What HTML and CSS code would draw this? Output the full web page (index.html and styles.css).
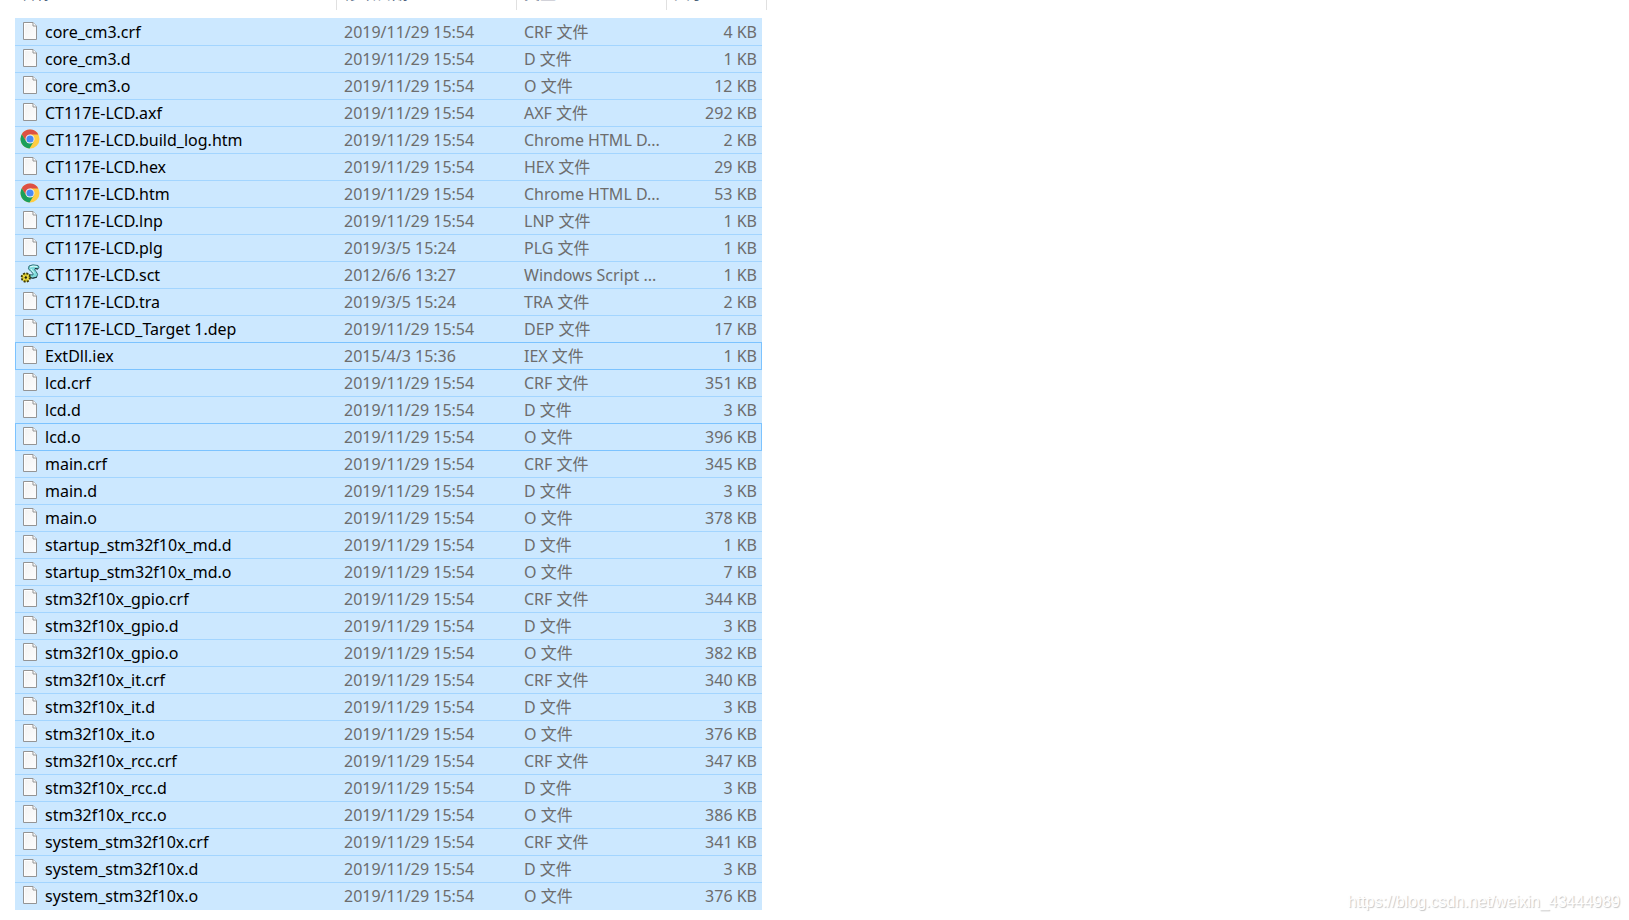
FILE: index.html
```html
<!DOCTYPE html>
<html lang="zh-CN">
<head>
<meta charset="utf-8">
<title>文件列表</title>
<link rel="stylesheet" href="styles.css">
</head>
<body>
<svg class="sprite" aria-hidden="true">
  <defs>
    <linearGradient id="paper" x1="0" y1="0" x2="1" y2="1"><stop offset="0" stop-color="#f2f2f2"/><stop offset="1" stop-color="#fdfdfd"/></linearGradient>
  </defs>
  <symbol id="file" viewBox="0 0 20 20">
    <path d="M3.5 1.5H13L16.500 5V18.500H3.500Z" fill="url(#paper)" stroke="#949494"/>
    <path d="M4.500 17.500V2.500H12" fill="none" stroke="#fff"/>
    <path d="M13 1.500V5H16.500" fill="#fff" stroke="#949494"/>
  </symbol>
  <symbol id="chrome" viewBox="0 0 20 20">
    <circle cx="10" cy="10" r="9.500" fill="#ffcd42"/>
    <path d="M1.800 5.200A9.500 9.500 0 0 1 18.300 5.500H10L6.100 12.200Z" fill="#dd5044"/>
    <path d="M1.800 5.200A9.500 9.500 0 0 0 9.500 19.500L13.900 12.300H6.100Z" fill="#1a9f5c"/>
    <circle cx="10" cy="10" r="4.500" fill="#f1f3f4"/>
    <circle cx="10" cy="10" r="3.600" fill="#4a8af4"/>
  </symbol>
  <symbol id="script" viewBox="0 0 20 20">
    <path d="M9 2Q12 0 18 1.500Q20 3 18 5L15 4.500Q14 6 16 7.500Q19 10 16.500 13.500Q13 15 8 13Q7 11 9 10.500L13 11Q14 9.500 11 7.500Q7 5 9 2Z" fill="#7fdcdc" stroke="#346f78"/>
    <path d="M10 3Q13 1.500 17 2.500M11 5Q11 6 14.500 9" fill="none" stroke="#e6ffff"/>
    <path d="M18 5L15 4.500M8 13Q13 15.500 17 13" fill="none" stroke="#1d2f35"/>
    <circle cx="5.800" cy="13.500" r="4.200" fill="#d8c72c" stroke="#3f3a08" stroke-width="1.800" stroke-dasharray="2 1.300"/>
    <path d="M3 11.500L8.500 15.500M8.500 11L3.500 16" stroke="#fff06a"/>
    <circle cx="5.800" cy="13.500" r="1.200" fill="#242208"/>
  </symbol>
</svg>
<main class="pane">
<table class="files">
<colgroup><col class="c-name"><col class="c-date"><col class="c-type"><col class="c-size"></colgroup>
<thead><tr>
<th><div class="head first"><span>名称</span></div></th>
<th><div class="head"><span>修改日期</span></div></th>
<th><div class="head"><span>类型</span></div></th>
<th><div class="head last"><span>大小</span></div></th>
</tr></thead>
<tbody>
<tr><td><div class="name"><svg><use href="#file"/></svg>core_cm3.crf</div></td><td>2019/11/29 15:54</td><td>CRF 文件</td><td>4 KB</td></tr>
<tr><td><div class="name"><svg><use href="#file"/></svg>core_cm3.d</div></td><td>2019/11/29 15:54</td><td>D 文件</td><td>1 KB</td></tr>
<tr><td><div class="name"><svg><use href="#file"/></svg>core_cm3.o</div></td><td>2019/11/29 15:54</td><td>O 文件</td><td>12 KB</td></tr>
<tr><td><div class="name"><svg><use href="#file"/></svg>CT117E-LCD.axf</div></td><td>2019/11/29 15:54</td><td>AXF 文件</td><td>292 KB</td></tr>
<tr><td><div class="name"><svg><use href="#chrome"/></svg>CT117E-LCD.build_log.htm</div></td><td>2019/11/29 15:54</td><td>Chrome HTML D...</td><td>2 KB</td></tr>
<tr><td><div class="name"><svg><use href="#file"/></svg>CT117E-LCD.hex</div></td><td>2019/11/29 15:54</td><td>HEX 文件</td><td>29 KB</td></tr>
<tr><td><div class="name"><svg><use href="#chrome"/></svg>CT117E-LCD.htm</div></td><td>2019/11/29 15:54</td><td>Chrome HTML D...</td><td>53 KB</td></tr>
<tr><td><div class="name"><svg><use href="#file"/></svg>CT117E-LCD.lnp</div></td><td>2019/11/29 15:54</td><td>LNP 文件</td><td>1 KB</td></tr>
<tr><td><div class="name"><svg><use href="#file"/></svg>CT117E-LCD.plg</div></td><td>2019/3/5 15:24</td><td>PLG 文件</td><td>1 KB</td></tr>
<tr><td><div class="name"><svg><use href="#script"/></svg>CT117E-LCD.sct</div></td><td>2012/6/6 13:27</td><td>Windows Script ...</td><td>1 KB</td></tr>
<tr><td><div class="name"><svg><use href="#file"/></svg>CT117E-LCD.tra</div></td><td>2019/3/5 15:24</td><td>TRA 文件</td><td>2 KB</td></tr>
<tr><td><div class="name"><svg><use href="#file"/></svg>CT117E-LCD_Target 1.dep</div></td><td>2019/11/29 15:54</td><td>DEP 文件</td><td>17 KB</td></tr>
<tr class="focus"><td><div class="name"><svg><use href="#file"/></svg>ExtDll.iex</div></td><td>2015/4/3 15:36</td><td>IEX 文件</td><td>1 KB</td></tr>
<tr><td><div class="name"><svg><use href="#file"/></svg>lcd.crf</div></td><td>2019/11/29 15:54</td><td>CRF 文件</td><td>351 KB</td></tr>
<tr><td><div class="name"><svg><use href="#file"/></svg>lcd.d</div></td><td>2019/11/29 15:54</td><td>D 文件</td><td>3 KB</td></tr>
<tr class="focus"><td><div class="name"><svg><use href="#file"/></svg>lcd.o</div></td><td>2019/11/29 15:54</td><td>O 文件</td><td>396 KB</td></tr>
<tr><td><div class="name"><svg><use href="#file"/></svg>main.crf</div></td><td>2019/11/29 15:54</td><td>CRF 文件</td><td>345 KB</td></tr>
<tr><td><div class="name"><svg><use href="#file"/></svg>main.d</div></td><td>2019/11/29 15:54</td><td>D 文件</td><td>3 KB</td></tr>
<tr><td><div class="name"><svg><use href="#file"/></svg>main.o</div></td><td>2019/11/29 15:54</td><td>O 文件</td><td>378 KB</td></tr>
<tr><td><div class="name"><svg><use href="#file"/></svg>startup_stm32f10x_md.d</div></td><td>2019/11/29 15:54</td><td>D 文件</td><td>1 KB</td></tr>
<tr><td><div class="name"><svg><use href="#file"/></svg>startup_stm32f10x_md.o</div></td><td>2019/11/29 15:54</td><td>O 文件</td><td>7 KB</td></tr>
<tr><td><div class="name"><svg><use href="#file"/></svg>stm32f10x_gpio.crf</div></td><td>2019/11/29 15:54</td><td>CRF 文件</td><td>344 KB</td></tr>
<tr><td><div class="name"><svg><use href="#file"/></svg>stm32f10x_gpio.d</div></td><td>2019/11/29 15:54</td><td>D 文件</td><td>3 KB</td></tr>
<tr><td><div class="name"><svg><use href="#file"/></svg>stm32f10x_gpio.o</div></td><td>2019/11/29 15:54</td><td>O 文件</td><td>382 KB</td></tr>
<tr><td><div class="name"><svg><use href="#file"/></svg>stm32f10x_it.crf</div></td><td>2019/11/29 15:54</td><td>CRF 文件</td><td>340 KB</td></tr>
<tr><td><div class="name"><svg><use href="#file"/></svg>stm32f10x_it.d</div></td><td>2019/11/29 15:54</td><td>D 文件</td><td>3 KB</td></tr>
<tr><td><div class="name"><svg><use href="#file"/></svg>stm32f10x_it.o</div></td><td>2019/11/29 15:54</td><td>O 文件</td><td>376 KB</td></tr>
<tr><td><div class="name"><svg><use href="#file"/></svg>stm32f10x_rcc.crf</div></td><td>2019/11/29 15:54</td><td>CRF 文件</td><td>347 KB</td></tr>
<tr><td><div class="name"><svg><use href="#file"/></svg>stm32f10x_rcc.d</div></td><td>2019/11/29 15:54</td><td>D 文件</td><td>3 KB</td></tr>
<tr><td><div class="name"><svg><use href="#file"/></svg>stm32f10x_rcc.o</div></td><td>2019/11/29 15:54</td><td>O 文件</td><td>386 KB</td></tr>
<tr><td><div class="name"><svg><use href="#file"/></svg>system_stm32f10x.crf</div></td><td>2019/11/29 15:54</td><td>CRF 文件</td><td>341 KB</td></tr>
<tr><td><div class="name"><svg><use href="#file"/></svg>system_stm32f10x.d</div></td><td>2019/11/29 15:54</td><td>D 文件</td><td>3 KB</td></tr>
<tr><td><div class="name"><svg><use href="#file"/></svg>system_stm32f10x.o</div></td><td>2019/11/29 15:54</td><td>O 文件</td><td>376 KB</td></tr>
</tbody>
</table>
</main>
<div class="watermark">https://blog.csdn.net/weixin_43444989</div>
</body>
</html>
```
FILE: styles.css
```css
* { box-sizing: border-box; }
body {
  margin: 0;
  background: #fff;
  color: #000;
  font: 16px/24px "Noto Sans", "Noto Sans CJK SC", sans-serif;
}
.sprite { position: absolute; width: 0; height: 0; }
.pane { padding: 0 15px; }

.files { width: 747px; table-layout: fixed; border-collapse: separate; border-spacing: 0; }
.c-name { width: 322px; }
.c-date { width: 180px; }
.c-type { width: 150px; }
.c-size { width: 95px; }

th { height: 18px; padding: 0; vertical-align: top; text-align: left; font-weight: 400; }
.head { height: 10px; padding-left: 7px; overflow: hidden; border-right: 1px solid #e0e0e0; color: #4c607a; }
.head.first { padding-left: 5px; }
.head.last { margin-right: -5px; }
.head span { display: block; margin-top: -17px; line-height: 20px; }

td {
  height: 27px;
  padding: 0 0 0 7px;
  line-height: 26px;
  white-space: nowrap;
  vertical-align: top;
  background: #cce8ff;
  border-top: 1px solid #a3d5ff;
  color: #6d6d6d;
}
td:first-child { padding-left: 5px; color: #000; }
td:last-child { padding: 0 5px 0 0; text-align: right; }
tbody tr:first-child td { border-top-color: #cce8ff; }
tbody tr:last-child td { height: 28px; }
.focus td, .focus + tr td { border-top-color: #7cc3ff; }
.focus td:first-child { box-shadow: inset 1px 0 #7cc3ff; }
.focus td:last-child { box-shadow: inset -1px 0 #7cc3ff; }

.name { display: flex; gap: 5px; }
.name svg { flex: none; width: 20px; height: 20px; margin-top: 2px; }

.watermark {
  position: absolute;
  right: 9px;
  bottom: 8px;
  color: #fff;
  font: 16px/20px "Liberation Sans", sans-serif;
  text-shadow: 1px 1px 1px #c4c4c4;
}
```
